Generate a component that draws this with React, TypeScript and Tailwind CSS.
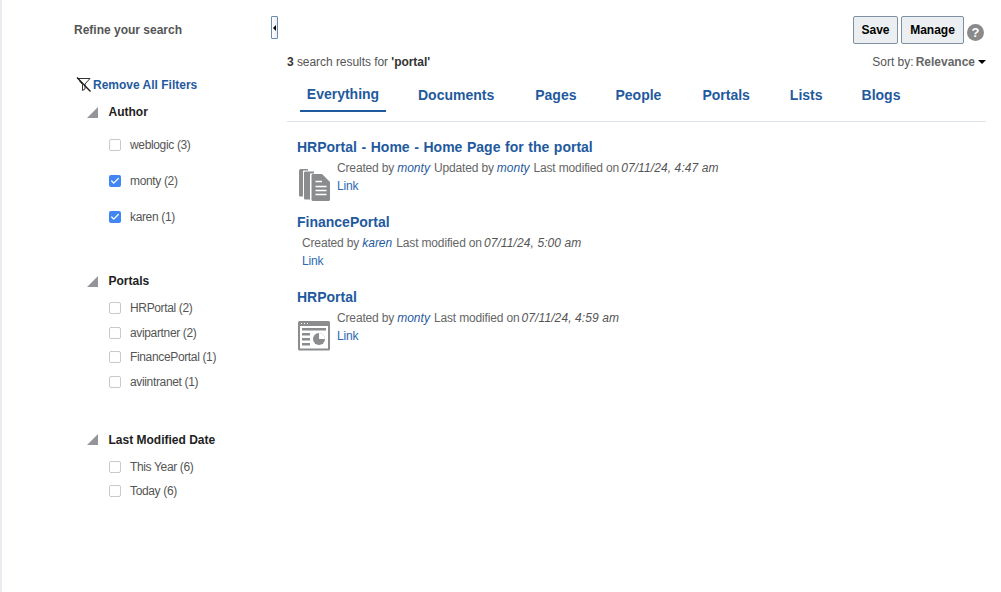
import { Check } from 'lucide-react'

const AUTHORS = [
  { label: 'weblogic (3)', checked: false },
  { label: 'monty (2)', checked: true },
  { label: 'karen (1)', checked: true },
]
const PORTALS = ['HRPortal (2)', 'avipartner (2)', 'FinancePortal (1)', 'aviintranet (1)']
const DATES = ['This Year (6)', 'Today (6)']
const TABS = [
  { label: 'Everything', cls: 'w-[86px] ml-[13px] border-b-[2px] border-[#1f5a9e]', up: true },
  { label: 'Documents', cls: 'ml-[32px]' },
  { label: 'Pages', cls: 'ml-[41px]' },
  { label: 'People', cls: 'ml-[39px]' },
  { label: 'Portals', cls: 'ml-[41px]' },
  { label: 'Lists', cls: 'ml-[40px]' },
  { label: 'Blogs', cls: 'ml-[39px]' },
]

function Box({ checked }: { checked?: boolean }) {
  return checked ? (
    <span className="w-3 h-3 rounded-[2px] bg-[#4285f4] flex items-center justify-center shrink-0">
      <Check className="w-[10px] h-[10px] text-white" strokeWidth={3} />
    </span>
  ) : (
    <span className="w-3 h-3 rounded-[2px] border border-[#c9c9c9] bg-white shrink-0" />
  )
}

function Option({ label, checked }: { label: string; checked?: boolean }) {
  return (
    <div className="flex items-center gap-[9px] text-[12px] leading-[14px] tracking-[-0.35px] text-[#555]">
      <Box checked={checked} />
      <span>{label}</span>
    </div>
  )
}

function GroupHead({ title }: { title: string }) {
  return (
    <div className="flex items-center gap-[10.5px] h-[14px]">
      <svg width="11" height="11" viewBox="0 0 11 11" className="shrink-0">
        <path d="M11 0V11H0Z" fill="#939598" />
      </svg>
      <span className="text-[12px] leading-[14px] font-bold text-[#222]">{title}</span>
    </div>
  )
}

function NoFilterIcon() {
  return (
    <svg width="15" height="15" viewBox="0 0 15 15" fill="none" className="shrink-0">
      <path d="M1.5 1.5H14L9 7V12L6.5 13.5V7.5L3.5 4" stroke="#333" strokeWidth="1" />
      <path d="M1 0.5L14.5 14.5" stroke="#111" strokeWidth="1.2" />
    </svg>
  )
}

function DocsIcon() {
  return (
    <svg width="33" height="33" viewBox="0 0 33 33" className="shrink-0">
      <path d="M2 3C2 2 2.6 1 3.6 1H11V2.5H6V28.5H3.6C2.6 28.5 2 28 2 27Z" fill="#8a8c8e" />
      <path d="M7 5C7 4 7.6 3.5 8.6 3.5H17V5.5H13V31.5H8.6C7.6 31.5 7 31 7 30Z" fill="#8a8c8e" />
      <path d="M14.5 7.5C14.5 6.8 15 6 15.7 6H25L33 14V31.5C33 32.2 32.5 33 31.8 33H15.7C15 33 14.5 32.2 14.5 31.5Z" fill="#8a8c8e" />
      <path d="M18.5 13.5H25M18.5 18.5H29.5M18.5 22.5H29.5M18.5 26.5H29.5" stroke="#fff" strokeWidth="1.6" />
    </svg>
  )
}

function PortalIcon() {
  return (
    <svg width="33" height="30" viewBox="-1 0 33 30" className="shrink-0">
      <rect x="0" y="0" width="32" height="29.5" rx="1.5" fill="#8a8c8e" />
      <rect x="2" y="5" width="28" height="22.5" fill="#fff" />
      <path d="M3 2.5H4M6 2.5H7M9 2.5H10" stroke="#fff" strokeWidth="1" />
      <rect x="4" y="7" width="24" height="2.5" fill="#8a8c8e" />
      <rect x="4" y="12" width="8" height="2.5" fill="#8a8c8e" />
      <rect x="4" y="17" width="8" height="2.5" fill="#8a8c8e" />
      <rect x="4" y="22" width="8" height="2.5" fill="#8a8c8e" />
      <circle cx="21" cy="18" r="6" fill="#8a8c8e" />
      <path d="M21 18V12A6 6 0 0 1 27 18Z" fill="#fff" />
    </svg>
  )
}

function Meta({ parts }: { parts: { text: string; user?: boolean; date?: boolean }[] }) {
  return (
    <p className="text-[12px] leading-[14px] text-[#666] whitespace-nowrap">
      {parts.map((p, i) =>
        p.user ? (
          <i key={i} className="text-[#1f5a9e] ml-[3px] mr-[4px]">{p.text}</i>
        ) : p.date ? (
          <i key={i} className="text-[#555] ml-[2px] tracking-[0.1px]">{p.text}</i>
        ) : (
          <span key={i} className="tracking-[-0.15px]">{p.text}</span>
        ),
      )}
    </p>
  )
}

function ResultLink() {
  return <a className="block mt-[4px] text-[12px] leading-[14px] tracking-[-0.2px] text-[#2a69b0]">Link</a>
}

export default function App() {
  return (
    <div
      className="h-[592px] w-[1001px] overflow-hidden bg-white flex border-l-[2px] border-[#e9ebf1]"
      style={{ fontFamily: '"Liberation Sans", Arial, sans-serif' }}
    >
      {/* sidebar */}
      <aside className="w-[269px] shrink-0 pl-[72px] pt-[23px]">
        <h2 className="text-[12px] leading-[14px] font-bold text-[#555]">Refine your search</h2>
        <div className="flex items-center gap-[2px] mt-[40px] ml-[2px] h-[15px]">
          <NoFilterIcon />
          <a className="text-[12px] leading-[14px] font-bold text-[#1f5a9e]">Remove All Filters</a>
        </div>
        <div className="pl-[13px] mt-[13px]">
          <GroupHead title="Author" />
          <div className="pl-[22px] mt-[19px] flex flex-col gap-[22px]">
            {AUTHORS.map(a => (
              <Option key={a.label} label={a.label} checked={a.checked} />
            ))}
          </div>
          <div className="mt-[50px]">
            <GroupHead title="Portals" />
          </div>
          <div className="pl-[22px] mt-[13px] flex flex-col gap-[10.6px]">
            {PORTALS.map(p => (
              <Option key={p} label={p} />
            ))}
          </div>
          <div className="mt-[44px]">
            <GroupHead title="Last Modified Date" />
          </div>
          <div className="pl-[22px] mt-[13px] flex flex-col gap-[10.6px]">
            {DATES.map(d => (
              <Option key={d} label={d} />
            ))}
          </div>
        </div>
      </aside>

      {/* splitter */}
      <div className="w-[16px] shrink-0 pt-[16px]">
        <div className="w-[7px] h-[23px] border border-[#6d8bab] rounded-[1px] bg-gradient-to-r from-white to-[#e9edf2] flex items-center justify-center">
          <span className="w-0 h-0 border-y-[3px] border-y-transparent border-r-[3px] border-r-black" />
        </div>
      </div>

      {/* main */}
      <main className="w-[699px] shrink-0">
        <div className="flex items-center justify-end h-[44px] pt-[16px] pr-[2px] gap-[3px]">
          <button className="w-[45px] h-[28px] rounded-[2px] border border-[#7d8fa1] bg-[#eceff1] text-[12px] font-bold text-black">Save</button>
          <button className="w-[63px] h-[28px] rounded-[2px] border border-[#7d8fa1] bg-[#eceff1] text-[12px] font-bold text-black">Manage</button>
          <span className="w-[17px] h-[17px] mt-[4px] rounded-full bg-[#8a8a8a] text-white text-[13px] font-bold leading-[17px] text-center">?</span>
        </div>
        <div className="flex justify-between mt-[11px] h-[14px] text-[12px] leading-[14px] text-[#555]">
          <p className="tracking-[-0.05px]">
            <b className="text-[#333]">3</b> search results for <b className="text-[#333]">'portal'</b>
          </p>
          <p className="flex items-center">
            Sort by:<b className="ml-[2px] text-[#666]">Relevance</b>
            <span className="ml-[3px] w-0 h-0 border-x-[4px] border-x-transparent border-t-[4px] border-t-black" />
          </p>
        </div>
        <nav className="flex h-[42px] mt-[11px] border-b border-[#dde3e8] text-[14px] font-bold text-[#1f5a9e]">
          {TABS.map(t => (
            <a key={t.label} className={`h-[32px] leading-[16px] whitespace-nowrap text-center ${t.up ? 'pt-[6px]' : 'pt-[7px]'} ${t.cls}`}>
              {t.label}
            </a>
          ))}
        </nav>

        <section className="pl-[10px] pt-[16px]">
          <h3 className="text-[14px] leading-[18px] font-bold text-[#1f5a9e] [word-spacing:0.7px]">HRPortal - Home - Home Page for the portal</h3>
          <div className="flex gap-[7px] mt-[5px] h-[43px]">
            <div className="pt-[7px]">
              <DocsIcon />
            </div>
            <div>
              <Meta
                parts={[
                  { text: 'Created by' },
                  { text: 'monty', user: true },
                  { text: 'Updated by' },
                  { text: 'monty', user: true },
                  { text: 'Last modified on' },
                  { text: '07/11/24, 4:47 am', date: true },
                ]}
              />
              <ResultLink />
            </div>
          </div>
          <h3 className="text-[14px] leading-[18px] font-bold text-[#1f5a9e] mt-[9px]">FinancePortal</h3>
          <div className="pl-[5px] mt-[5px] h-[43px]">
            <Meta
              parts={[
                { text: 'Created by' },
                { text: 'karen', user: true },
                { text: 'Last modified on' },
                { text: '07/11/24, 5:00 am', date: true },
              ]}
            />
            <ResultLink />
          </div>
          <h3 className="text-[14px] leading-[18px] font-bold text-[#1f5a9e] mt-[9px]">HRPortal</h3>
          <div className="flex gap-[7px] mt-[5px]">
            <div className="pt-[10px]">
              <PortalIcon />
            </div>
            <div>
              <Meta
                parts={[
                  { text: 'Created by' },
                  { text: 'monty', user: true },
                  { text: 'Last modified on' },
                  { text: '07/11/24, 4:59 am', date: true },
                ]}
              />
              <ResultLink />
            </div>
          </div>
        </section>
      </main>
    </div>
  )
}
